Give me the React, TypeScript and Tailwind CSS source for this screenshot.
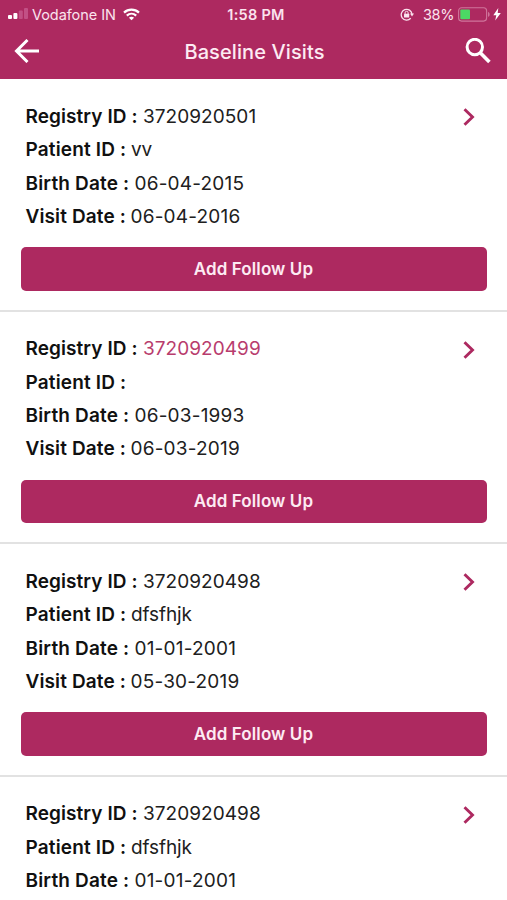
type Visit = {
  registry: string;
  patient: string;
  birth: string;
  visit?: string;
  highlighted?: boolean;
};

const visits: Visit[] = [
  { registry: "3720920501", patient: "vv", birth: "06-04-2015", visit: "06-04-2016" },
  { registry: "3720920499", patient: "", birth: "06-03-1993", visit: "06-03-2019", highlighted: true },
  { registry: "3720920498", patient: "dfsfhjk", birth: "01-01-2001", visit: "05-30-2019" },
  { registry: "3720920498", patient: "dfsfhjk", birth: "01-01-2001" },
];

function StatusBar() {
  return (
    <div className="grid h-[28px] grid-cols-[1fr_auto_1fr] items-center text-[14.5px] leading-[27px] text-[#fbe3ee]">
      <div className="flex items-center pl-2">
        <svg width="20" height="12" viewBox="0 0 20 12" className="mr-1 shrink-0">
          <rect x="0" y="7" width="4" height="4" rx="1" fill="#fff" />
          <rect x="5.4" y="5" width="4" height="6" rx="1" fill="#fff" />
          <rect x="10.8" y="2.5" width="4" height="8.5" rx="1" fill="#c25085" />
          <rect x="16" y="0" width="4" height="11" rx="1" fill="#c25085" />
        </svg>
        <span className="whitespace-nowrap tracking-[-0.06px]">Vodafone IN</span>
        <svg width="17" height="13" viewBox="0 0 17 13" className="ml-[7px] shrink-0" fill="none" stroke="#fff" strokeWidth="2.2">
          <path d="M1 4.6C5.2 .6 11.8 .6 16 4.6" />
          <path d="M3.8 7.6c2.7-2.5 6.7-2.5 9.4 0" />
          <path d="M8.5 12.3 5.9 9.8c1.5-1.3 3.7-1.3 5.2 0Z" fill="#fff" stroke="none" />
        </svg>
      </div>
      <span className="pl-[5px] font-semibold tracking-[0.25px]">1:58 PM</span>
      <div className="flex items-center justify-end pr-[6px]">
        <svg width="14" height="13" viewBox="0 0 14 13" className="mr-[9px] shrink-0" fill="none" stroke="#fbe3ee" strokeWidth="1.3">
          <path d="M10.7 10.3A5.4 5.4 0 1 1 12 6.2" />
          <path d="M10 5.6h4L12 8.6Z" fill="#fbe3ee" stroke="none" />
          <rect x="4" y="5.8" width="5.2" height="3.8" rx=".5" fill="#fbe3ee" stroke="none" />
          <path d="M5.1 6V4.8a1.5 1.5 0 0 1 3 0V6" strokeWidth="1" />
        </svg>
        <span className="tracking-[-0.4px]">38%</span>
        <svg width="33" height="15" viewBox="0 0 33 15" className="ml-1 shrink-0">
          <rect x=".6" y=".7" width="28" height="13.4" rx="3" fill="none" stroke="#cf749b" strokeWidth="1.1" />
          <rect x="2.3" y="2.6" width="9.7" height="9.6" rx="1" fill="#4cd964" />
          <path d="M30 5c2.2.5 2.2 4.3 0 4.8Z" fill="#cf749b" />
        </svg>
        <svg width="8" height="13" viewBox="0 0 8 13" className="ml-[2px] shrink-0" fill="#fff">
          <path d="M5.3 0 .3 7.2h3L2.2 12.6 7.8 5H4.7Z" />
        </svg>
      </div>
    </div>
  );
}

function Header() {
  return (
    <header className="h-[78.5px] bg-[#ad2960]">
      <StatusBar />
      <div className="grid h-[47px] grid-cols-[60px_1fr_60px] items-center">
        <svg width="26" height="24" viewBox="0 0 26 24" className="ml-[14px] mt-[-1px]" fill="none" stroke="#fff" strokeWidth="3">
          <path d="M25 12H3M13.5 1 2.5 12l11 11" />
        </svg>
        <h1 className="pl-[2px] text-center text-[20px] font-medium tracking-[0.1px] text-[#fdebf3]">Baseline Visits</h1>
        <svg width="26" height="26" viewBox="0 0 26 26" className="ml-[17.5px] mt-[-2px]" fill="none" stroke="#fff" strokeWidth="3">
          <circle cx="9.8" cy="9" r="7.7" />
          <path d="m15 14.4 9.4 9.6" strokeWidth="3.6" />
        </svg>
      </div>
    </header>
  );
}

function Field({ label, value, labelClass, valueClass }: { label: string; value: string; labelClass: string; valueClass: string }) {
  return (
    <div className="flex h-[33.4px] items-center whitespace-nowrap text-[19px] leading-[33px]">
      <span className={`shrink-0 font-semibold text-[#101010] ${labelClass}`}>{label} :</span>
      <span className={`ml-[5px] ${valueClass}`}>{value}</span>
    </div>
  );
}

function VisitCard({ item }: { item: Visit }) {
  return (
    <article className="h-[232.5px] border-b-2 border-[#e2e2e2] px-[20.5px] pt-[20.5px]">
      <div className="flex items-start justify-between pl-[5px]">
        <div>
          <Field label="Registry ID" value={item.registry} labelClass="w-[112.5px] tracking-[0.08px]" valueClass={item.highlighted ? "text-[#b83c6d] tracking-[0.05px]" : "text-[#202020] tracking-[0.05px]"} />
          <Field label="Patient ID" value={item.patient} labelClass="w-[100.5px] tracking-[0.15px]" valueClass="text-[#202020] tracking-[-0.1px]" />
          <Field label="Birth Date" value={item.birth} labelClass="w-[104px] tracking-[0.17px]" valueClass="text-[#202020] tracking-[0.2px]" />
          {item.visit && (
            <Field label="Visit Date" value={item.visit} labelClass="w-[100px] tracking-[0.12px]" valueClass="text-[#202020] tracking-[0.2px]" />
          )}
        </div>
        <svg width="12" height="18" viewBox="0 0 12 18" className="mr-[12px] mt-[8.5px]" fill="none" stroke="#ad2960" strokeWidth="2.9">
          <path d="m1.5 1.3 8 7.7-8 7.7" />
        </svg>
      </div>
      {item.visit && (
        <button className="mt-[14px] block h-[43.5px] w-full rounded-[5px] bg-[#ad2960] pt-px text-[17px] font-semibold tracking-[0.1px] text-[#fdebf3]">
          Add Follow Up
        </button>
      )}
    </article>
  );
}

export default function App() {
  return (
    <main className="h-[900px] w-[507px] overflow-hidden bg-white font-[Inter,'Liberation_Sans',sans-serif] [font-feature-settings:'calt'_0]">
      <Header />
      <div className="pt-[0.6px]">
        {visits.map((item, i) => (
          <VisitCard key={i} item={item} />
        ))}
      </div>
    </main>
  );
}
